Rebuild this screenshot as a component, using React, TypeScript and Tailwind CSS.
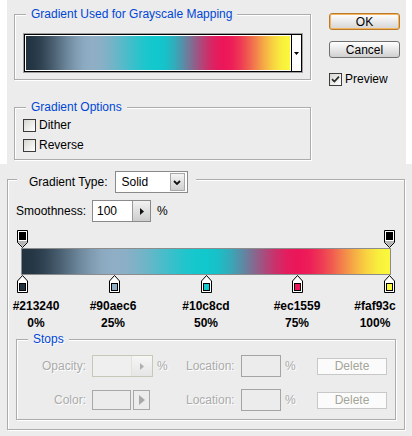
import type { ReactNode } from 'react';

const STOPS = [
  { hex: '#213240', pct: 0 },
  { hex: '#90aec6', pct: 25 },
  { hex: '#10c8cd', pct: 50 },
  { hex: '#ec1559', pct: 75 },
  { hex: '#faf93c', pct: 100 },
];

// label columns under the stops (first/last are pulled inward)
const LABEL_CLASS = ['-ml-[8px]', 'ml-[21px]', 'ml-[37px]', 'ml-[35px]', 'ml-[22px]'];

const toRgb = (hex: string) => [1, 3, 5].map((i) => parseInt(hex.slice(i, i + 2), 16));

// smoothness 100%: ease between each pair of stops
const smoothGradient = () => {
  const parts: string[] = [];
  for (let i = 0; i < STOPS.length - 1; i++) {
    const a = toRgb(STOPS[i].hex);
    const b = toRgb(STOPS[i + 1].hex);
    for (let k = 0; k < 8; k++) {
      const t = k / 8;
      const s = t * t * (3 - 2 * t);
      const c = a.map((v, j) => Math.round(v + (b[j] - v) * s));
      const p = STOPS[i].pct + (STOPS[i + 1].pct - STOPS[i].pct) * t;
      parts.push(`rgb(${c.join(',')}) ${p}%`);
    }
  }
  parts.push(`${STOPS[STOPS.length - 1].hex} 100%`);
  return `linear-gradient(to right, ${parts.join(', ')})`;
};

const Group = ({ title, className, children }: { title: ReactNode; className: string; children?: ReactNode }) => (
  <div className={`relative border border-[#acacac] shadow-[inset_1px_1px_0_#fff,1px_1px_0_#fff] ${className}`}>
    <span className="absolute -top-[8px] left-[11px] bg-[#ececec] px-[5px] leading-[15px] text-[#0046d5]">{title}</span>
    {children}
  </div>
);

const Check = ({ checked, label }: { checked?: boolean; label: string }) => (
  <div className="flex h-[13px] items-center">
    <div className="flex h-[13px] w-[13px] items-center justify-center border border-[#3c3c3c] bg-[linear-gradient(135deg,#d6d6d0,#ffffff)]">
      {checked && (
        <svg width="9" height="9" viewBox="0 0 9 9">
          <path d="M1 4.2 L3.4 6.6 L8 1.6" stroke="#2a2a2a" strokeWidth="1.7" fill="none" />
        </svg>
      )}
    </div>
    <span className="ml-[3px] leading-[15px]">{label}</span>
  </div>
);

const OpacityStop = () => (
  <svg width="11" height="18" viewBox="0 0 11 18">
    <path d="M0.5 0.5H10.5V12.5L5.5 17.5L0.5 12.5Z" fill="#fff" stroke="#000" />
    <rect x="2" y="2" width="7" height="8" fill="#000" />
    <path d="M1 11H10V12.3L5.5 16.8L1 12.3Z" fill="#b4b4b4" />
  </svg>
);

const ColorStop = ({ hex }: { hex: string }) => (
  <svg width="11" height="18" viewBox="0 0 11 18">
    <path d="M5.5 0.5L10.5 6V17.5H0.5V6Z" fill="#fff" stroke="#000" />
    <rect x="2.5" y="8.5" width="6" height="7" fill={hex} stroke="#000" />
  </svg>
);

const DeleteButton = () => (
  <div className="ml-[4px] flex h-[17px] w-[70px] items-center justify-center border border-[#c8c8c8] bg-[#fbfbfb] leading-none text-[#a4a498]">
    Delete
  </div>
);

export default function App() {
  const gradient = smoothGradient();

  return (
    <div className="h-[436px] w-[412px] overflow-hidden bg-white font-['Liberation_Sans',Arial,sans-serif] text-[12px] text-black">
      {/* top dialog part */}
      <div className="ml-[7px] flex h-[164px] w-[399px] bg-[#ececec]">
        <div className="flex flex-col pl-[7px] pt-[14px]">
          <Group title="Gradient Used for Grayscale Mapping" className="h-[66px] w-[297px] pl-[8px] pt-[18px]">
            <div className="flex h-[40px] w-[280px] border border-[#a0a0a0]">
              <div className="flex flex-1 border border-black">
                <div className="flex-1 border border-white" style={{ backgroundImage: gradient }} />
                <div className="flex w-[10px] items-center justify-center border-l border-black bg-white">
                  <svg width="5" height="3" viewBox="0 0 5 3">
                    <path d="M0 0H5L2.5 3Z" fill="#000" />
                  </svg>
                </div>
              </div>
            </div>
          </Group>
          <Group title="Gradient Options" className="mt-[27px] flex h-[53px] w-[297px] flex-col gap-[7px] pl-[8px] pt-[11px]">
            <Check label="Dither" />
            <Check label="Reverse" />
          </Group>
        </div>

        <div className="ml-[18px] flex flex-col pt-[13px]">
          <div className="flex h-[17px] w-[71px] items-center justify-center rounded-[3px] border border-[#b87a2c] bg-[linear-gradient(#ffffff,#d4d4d4)] leading-none shadow-[inset_0_0_0_1px_#f4b55e]">
            OK
          </div>
          <div className="mt-[11px] flex h-[17px] w-[71px] items-center justify-center rounded-[3px] border border-[#707070] bg-[linear-gradient(#ffffff,#d0d0d0)] leading-none">
            Cancel
          </div>
          <div className="mt-[15px]">
            <Check checked label="Preview" />
          </div>
        </div>
      </div>

      {/* gradient editor part */}
      <div className="h-[272px] bg-[#ececec] pl-[7px] pt-[15px]">
        <div className="relative h-[251px] w-[398px] border border-[#acacac] pl-[8px] pt-[20px] shadow-[inset_1px_1px_0_#fff,1px_1px_0_#fff]">
          <div className="absolute -top-[9px] left-[9px] flex h-[22px] items-center bg-[#ececec] pl-[12px] pr-[8px]">
            <span className="leading-[15px]">Gradient Type:</span>
            <div className="ml-[7px] flex h-[22px] w-[73px] items-center border border-[#8a8a8a] bg-white">
              <span className="flex-1 pl-[6px] leading-[15px]">Solid</span>
              <div className="mr-[2px] flex h-[18px] w-[15px] items-center justify-center border border-[#a8a8a8] bg-[linear-gradient(#f4f4f4,#cfcfcf)]">
                <svg width="8" height="5" viewBox="0 0 8 5">
                  <path d="M1 1 L4 4 L7 1" stroke="#111" strokeWidth="1.8" fill="none" />
                </svg>
              </div>
            </div>
          </div>

          <div className="flex h-[22px] items-center">
            <span className="w-[76px] leading-[15px]">Smoothness:</span>
            <div className="flex h-[22px] w-[59px] items-center border border-[#8a8a8a] bg-white">
              <span className="flex-1 pl-[4px] leading-[15px]">100</span>
              <div className="flex h-full w-[18px] items-center justify-center border-l border-[#9a9a9a] bg-[linear-gradient(#f2f2f2,#cdcdcd)]">
                <svg width="4" height="7" viewBox="0 0 4 7">
                  <path d="M0 0L4 3.5L0 7Z" fill="#111" />
                </svg>
              </div>
            </div>
            <span className="ml-[6px] leading-[15px]">%</span>
          </div>

          <div className="ml-[1px] mt-[8px] w-[378px]">
            <div className="flex h-[18px] justify-between">
              <OpacityStop />
              <OpacityStop />
            </div>
            <div className="ml-[4px] h-[27px] w-[370px] border border-[#8c8c8c]" style={{ backgroundImage: gradient }} />
            <div className="flex h-[18px] justify-between">
              {STOPS.map((s) => (
                <ColorStop key={s.pct} hex={s.hex} />
              ))}
            </div>
          </div>

          <div className="mt-[5px] flex font-bold leading-[17px]">
            {STOPS.map((s, i) => (
              <div key={s.pct} className={`flex w-[56px] flex-col items-center ${LABEL_CLASS[i]}`}>
                <span>{s.hex}</span>
                <span>{s.pct}%</span>
              </div>
            ))}
          </div>

          <Group title="Stops" className="mt-[7px] h-[81px] w-[380px] pt-[15px] text-[#ababab] [text-shadow:1px_1px_0_#fff]">
            <div className="flex h-[22px] items-center">
              <span className="w-[69px] text-right leading-[15px]">Opacity:</span>
              <div className="ml-[6px] flex h-[22px] w-[61px] border border-[#c8c8ba] bg-[#efefef]">
                <div className="flex-1" />
                <div className="flex w-[21px] items-center justify-center border-l border-[#e2e2da] bg-[linear-gradient(#f6f6f6,#e6e6e6)]">
                  <svg width="4" height="7" viewBox="0 0 4 7">
                    <path d="M0 0L4 3.5L0 7Z" fill="#b0b0b0" />
                  </svg>
                </div>
              </div>
              <span className="ml-[4px] w-[29px] leading-[15px]">%</span>
              <span className="w-[55px] leading-[15px]">Location:</span>
              <div className="h-[22px] w-[40px] border border-[#a4a4a4]" />
              <span className="ml-[4px] w-[28px] leading-[15px]">%</span>
              <DeleteButton />
            </div>
            <div className="mt-[12px] flex h-[22px] items-center">
              <span className="w-[69px] text-right leading-[15px]">Color:</span>
              <div className="ml-[6px] flex w-[61px] items-center">
                <div className="h-[20px] w-[39px] border border-[#a8a8a8]" />
                <div className="ml-[2px] flex h-[20px] w-[17px] items-center justify-center border border-[#a8a8a8]">
                  <svg width="6" height="10" viewBox="0 0 6 10">
                    <path d="M0 0L6 5L0 10Z" fill="#a8a8a8" />
                  </svg>
                </div>
              </div>
              <span className="ml-[4px] w-[29px]" />
              <span className="w-[55px] leading-[15px]">Location:</span>
              <div className="h-[22px] w-[40px] border border-[#a4a4a4]" />
              <span className="ml-[4px] w-[28px] leading-[15px]">%</span>
              <DeleteButton />
            </div>
          </Group>
        </div>
      </div>
    </div>
  );
}
